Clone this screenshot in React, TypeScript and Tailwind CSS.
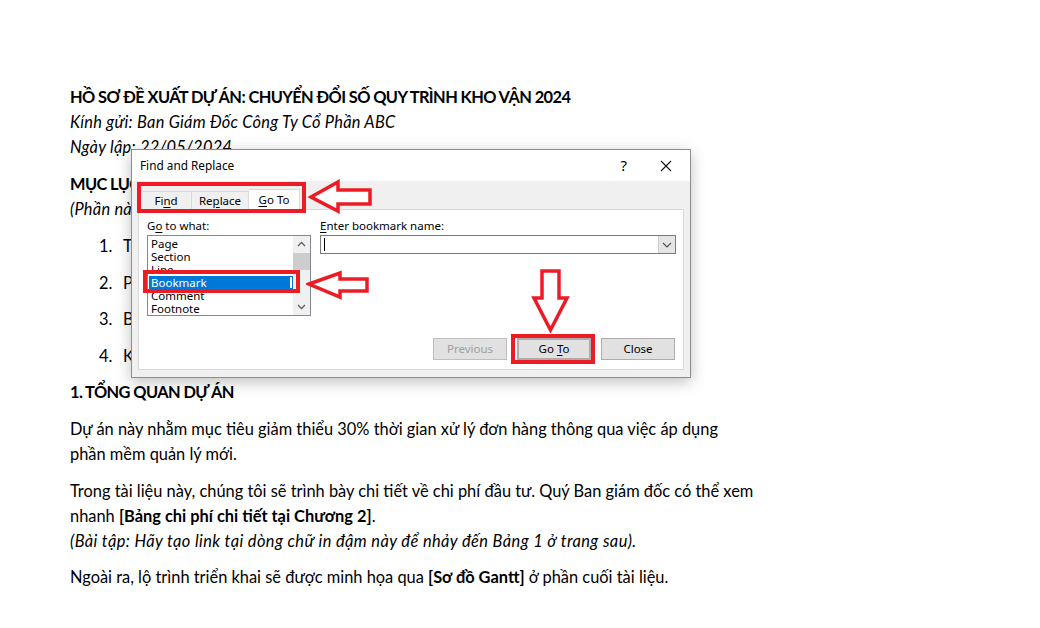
import React from "react";

const doc = { fontFamily: 'Lato, "Noto Sans", sans-serif' };
const ui = { fontFamily: '"Noto Sans", "Open Sans", sans-serif' };

const U = ({ children }: { children: React.ReactNode }) => (
  <span className="underline underline-offset-2">{children}</span>
);

const listItems = ["Page", "Section", "Line", "Bookmark", "Comment", "Footnote"];

const Document = () => (
  <div className="pl-[70px] pt-[84px] text-[16.4px] leading-[25px] text-black" style={doc}>
    <p className="mb-[12px]">
      <span className="font-bold tracking-[-0.6px]">HỒ SƠ ĐỀ XUẤT DỰ ÁN: CHUYỂN ĐỔI SỐ QUY TRÌNH KHO VẬN 2024</span>
      <br />
      <span className="italic tracking-[0.25px]">Kính gửi: Ban Giám Đốc Công Ty Cổ Phần ABC</span>
      <br />
      <span className="italic tracking-[0.25px]">Ngày lập: 22/05/2024</span>
    </p>
    <p className="mb-[12px]">
      <span className="font-bold tracking-[-0.6px]">MỤC LỤC</span>
      <br />
      <span className="italic tracking-[0.25px]">(Phần này sẽ được cập nhật tự động)</span>
    </p>
    <ol className="mb-[11px]">
      {["Tổng quan dự án", "Phân tích chi phí", "Bảng tiến độ", "Kết luận"].map((t, i) => (
        <li key={t} className="flex mb-[11.5px] pl-[29px]">
          <span className="w-[24px]">{i + 1}.</span>
          <span>{t}</span>
        </li>
      ))}
    </ol>
    <p className="mb-[12px] font-bold tracking-[-0.6px]">1. TỔNG QUAN DỰ ÁN</p>
    <p className="mb-[12px]">
      Dự án này nhằm mục tiêu giảm thiểu 30% thời gian xử lý đơn hàng thông qua việc áp dụng
      <br />
      phần mềm quản lý mới.
    </p>
    <p className="mb-[11px]">
      Trong tài liệu này, chúng tôi sẽ trình bày chi tiết về chi phí đầu tư. Quý Ban giám đốc có thể xem
      <br />
      nhanh <span className="font-bold">[Bảng chi phí chi tiết tại Chương 2]</span>.
      <br />
      <span className="italic tracking-[0.4px]">
        (Bài tập: Hãy tạo link tại dòng chữ in đậm này để nhảy đến Bảng 1 ở trang sau).
      </span>
    </p>
    <p>
      Ngoài ra, lộ trình triển khai sẽ được minh họa qua <span className="font-bold">[Sơ đồ Gantt]</span> ở phần cuối tài liệu.
    </p>
  </div>
);

const Btn = ({
  children,
  className = "",
}: {
  children: React.ReactNode;
  className?: string;
}) => (
  <div
    className={`h-[22px] w-[74px] flex items-center justify-center bg-[#e1e1e1] border border-[#adadad] ${className}`}
  >
    <span>{children}</span>
  </div>
);

const Dialog = () => (
  <div
    className="absolute left-[131px] top-[149px] w-[560px] h-[229px] border border-[#8c8c8c] bg-[#f0f0f0] flex flex-col shadow-[0_4px_14px_rgba(0,0,0,0.25)] text-[11.5px] text-black"
    style={ui}
  >
    <div className="h-[31px] bg-white flex items-center pl-[8px] pr-[14px]">
      <span className="flex-1 text-[11.8px]">Find and Replace</span>
      <span className="text-[15px] mr-[33px]">?</span>
      <svg width="12" height="12" viewBox="0 0 12 12" className="mr-[4px]">
        <path d="M1 1 L11 11 M11 1 L1 11" stroke="#111" strokeWidth="1.1" />
      </svg>
    </div>
    <div className="flex-1 flex flex-col px-[6px] pb-[7px]">
      <div className="flex items-end h-[28px] pl-[2px]">
        <div className="h-[18px] w-[52px] flex items-center justify-center border border-b-0 border-[#d9d9d9] bg-[#f0f0f0]">
          <span>
            Fi<U>n</U>d
          </span>
        </div>
        <div className="h-[18px] w-[57px] flex items-center justify-center border border-b-0 border-l-0 border-[#d9d9d9] bg-[#f0f0f0]">
          <span>
            Re<U>p</U>lace
          </span>
        </div>
        <div className="h-[21px] w-[51px] flex items-center justify-center border border-b-0 border-l-0 border-[#d9d9d9] bg-white -mb-px relative">
          <span>
            <U>G</U>o To
          </span>
        </div>
      </div>
      <div className="flex-1 bg-white border border-[#d9d9d9] pt-[8px] pl-[8px] pr-[7px] pb-[9px] flex flex-col">
        <div className="flex gap-[9px]">
          <div className="w-[164px] flex flex-col">
            <div className="leading-[15px] mb-[2px]">
              G<U>o</U> to what:
            </div>
            <div className="h-[81px] border border-[#828790] flex">
              <div className="flex-1 pt-[1px] pl-[1px] overflow-hidden">
                {listItems.map((t) => (
                  <div
                    key={t}
                    className={`h-[13px] leading-[13px] pl-[2px] ${
                      t === "Bookmark" ? "bg-[#0078d7] text-white relative" : ""
                    }`}
                  >
                    {t}
                    {t === "Bookmark" && (
                      <span className="absolute right-[1px] top-[1px] w-[2px] h-[11px] bg-white" />
                    )}
                  </div>
                ))}
              </div>
              <div className="w-[17px] bg-[#f0f0f0] flex flex-col items-center">
                <svg width="17" height="17" viewBox="0 0 17 17">
                  <path d="M5 10 L8.5 6.5 L12 10" stroke="#606060" strokeWidth="1.3" fill="none" />
                </svg>
                <div className="w-[17px] h-[17px] bg-[#cdcdcd]" />
                <div className="flex-1" />
                <svg width="17" height="17" viewBox="0 0 17 17">
                  <path d="M5 7 L8.5 10.5 L12 7" stroke="#606060" strokeWidth="1.3" fill="none" />
                </svg>
              </div>
            </div>
          </div>
          <div className="flex-1 flex flex-col">
            <div className="leading-[15px] mb-[2px]">
              <U>E</U>nter bookmark name:
            </div>
            <div className="h-[19px] border border-[#7a7a7a] flex items-center">
              <div className="flex-1 pl-[3px]">
                <div className="w-px h-[13px] bg-black" />
              </div>
              <div className="w-[17px] h-full bg-[#e5e5e5] border-l border-[#cccccc] flex items-center justify-center">
                <svg width="10" height="6" viewBox="0 0 10 6">
                  <path d="M1 1 L5 5 L9 1" stroke="#505050" strokeWidth="1.1" fill="none" />
                </svg>
              </div>
            </div>
          </div>
        </div>
        <div className="flex-1" />
        <div className="flex justify-end gap-[10px] mr-px">
          <Btn className="text-[#a0a0a0] border-[#bfbfbf]">Previous</Btn>
          <Btn className="border-2 border-[#0078d7]">
            Go <U>T</U>o
          </Btn>
          <Btn>Close</Btn>
        </div>
      </div>
    </div>
  </div>
);

const Arrow = ({
  className,
  w,
  h,
  points,
}: {
  className: string;
  w: number;
  h: number;
  points: string;
}) => (
  <svg width={w} height={h} viewBox={`0 0 ${w} ${h}`} className={`absolute ${className}`}>
    <polygon points={points} fill="white" stroke="#ed1c24" strokeWidth="3.5" strokeLinejoin="miter" />
  </svg>
);

export default function App() {
  return (
    <div className="relative w-[1040px] h-[628px] bg-white overflow-hidden">
      <Document />
      <Dialog />
      {/* annotations */}
      <div className="absolute left-[137px] top-[182px] w-[169px] h-[31px] border-4 border-[#ed1c24]" />
      <div className="absolute left-[143px] top-[270px] w-[157px] h-[23px] border-4 border-[#ed1c24]" />
      <div className="absolute left-[511px] top-[334px] w-[84px] h-[30px] border-4 border-[#ed1c24]" />
      <Arrow
        className="left-[308px] top-[179px]"
        w={66}
        h={35}
        points="3,18 30,3 30,11 62,11 62,25 30,25 30,32"
      />
      <Arrow
        className="left-[306px] top-[270px]"
        w={64}
        h={30}
        points="3,14 34,3 34,9 61,9 61,21 34,21 34,27"
      />
      <Arrow
        className="left-[531px] top-[268px]"
        w={39}
        h={65}
        points="11,3 28,3 28,30 36,30 19.5,62 3,30 11,30"
      />
    </div>
  );
}
